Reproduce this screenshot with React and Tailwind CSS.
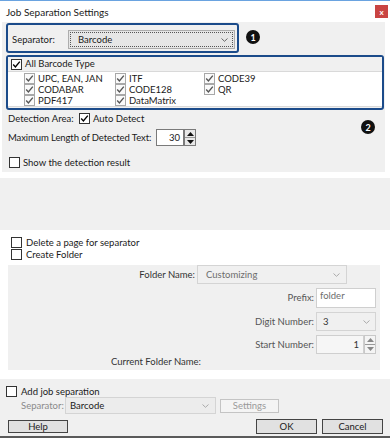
import React from 'react';

const Check = ({ checked, dim }) => (
  <span
    className={`inline-flex w-[11px] h-[11px] shrink-0 items-center justify-center border ${
      dim ? 'border-[#a8a8a8] bg-[#fafafa]' : 'border-[#333] bg-white'
    }`}
  >
    {checked && (
      <svg width="9" height="9" viewBox="0 0 9 9">
        <path d="M1.2 4.6 L3.4 6.9 L7.8 1.6" fill="none" stroke={dim ? '#555' : '#000'} strokeWidth="1.4" />
      </svg>
    )}
  </span>
);

const Chevron = ({ color = '#666' }) => (
  <svg width="7" height="4" viewBox="0 0 7 4">
    <path d="M0.5 0.5 L3.5 3.3 L6.5 0.5" fill="none" stroke={color} strokeWidth="1" />
  </svg>
);

const Badge = ({ n }) => (
  <span className="flex w-[14px] h-[14px] items-center justify-center rounded-full bg-[#111] text-[9px] font-bold leading-none text-white">
    {n}
  </span>
);

const Spin = ({ dim }) => (
  <div className={`flex flex-col w-[12px] h-full border ${dim ? 'border-[#c8c8c8] bg-[#f4f4f4]' : 'border-[#7a7a7a] bg-[#e8e8e8]'}`}>
    <div className="flex flex-1 items-center justify-center border-b border-[#9a9a9a]">
      <svg width="7" height="4" viewBox="0 0 7 4"><path d="M0 4 L3.5 0 L7 4 Z" fill={dim ? '#888' : '#111'} /></svg>
    </div>
    <div className="flex flex-1 items-center justify-center">
      <svg width="7" height="4" viewBox="0 0 7 4"><path d="M0 0 L3.5 4 L7 0 Z" fill={dim ? '#888' : '#111'} /></svg>
    </div>
  </div>
);

const barcodes = [
  ['UPC, EAN, JAN', 'ITF', 'CODE39'],
  ['CODABAR', 'CODE128', 'QR'],
  ['PDF417', 'DataMatrix', null],
];

export default function App() {
  return (
    <div
      className="relative w-[390px] h-[443px] overflow-hidden bg-white text-[9.5px] leading-none whitespace-nowrap text-[#1a1a1a] border-t border-[#6aa3e0]"
      style={{ fontFamily: 'Lato, "Liberation Sans", sans-serif' }}
    >
      {/* title bar */}
      <div className="flex h-[21px] items-center justify-between pl-[6px] pr-[2px]">
        <span className="text-[10px]">Job Separation Settings</span>
        <span className="flex w-[13px] h-[13px] items-center justify-center bg-[#c94442] text-[8px] font-bold text-white">x</span>
      </div>

      {/* barcode settings panel */}
      <div className="relative ml-[2px] w-[383px] h-[150px] bg-[#f0f0f0] flex flex-col">
        <div className="flex items-start mt-[1px]">
          <div className="ml-[4px] w-[233px] h-[30px] rounded-[3px] border-2 border-[#1b4b8a] flex items-center pl-[4px] pt-[3px]">
            <span className="w-[56px]">Separator:</span>
            <div className="flex w-[167px] h-[19px] items-center justify-between border border-[#adadad] bg-[#e6e6e6] p-[1px]">
              <div className="flex h-full flex-1 items-center justify-between border border-dotted border-[#555] pl-[7px] pr-[4px]">
                <span>Barcode</span>
                <Chevron />
              </div>
            </div>
          </div>
          <div className="ml-[7px] mt-[7px]">
            <Badge n="1" />
          </div>
        </div>

        <div className="ml-[4px] mt-[2px] w-[378px] h-[55px] rounded-[3px] border-2 border-[#1b4b8a] flex flex-col">
          <div className="flex h-[15px] items-center gap-[3px] pl-[3px] bg-[#f0f0f0]">
            <Check checked />
            <span>All Barcode Type</span>
          </div>
          <div className="flex flex-1 flex-col border-y border-[#d9d9d9] bg-white pt-[1px] pl-[16px] mb-[1px]">
            {barcodes.map((row, i) => (
              <div key={i} className="flex h-[11px] items-center">
                {row.map((name, j) => (
                  <div key={j} className={`flex items-center gap-[3px] ${j === 0 ? 'w-[91px]' : j === 1 ? 'w-[89px]' : ''}`}>
                    {name && (
                      <>
                        <Check checked dim />
                        <span>{name}</span>
                      </>
                    )}
                  </div>
                ))}
              </div>
            ))}
          </div>
        </div>

        <div className="flex h-[11px] items-center mt-[3px] pl-[6px]">
          <span className="w-[71px]">Detection Area:</span>
          <Check checked />
          <span className="ml-[3px]">Auto Detect</span>
        </div>

        <div className="flex h-[17px] items-center mt-[5px] pl-[6px]">
          <span className="w-[148px] tracking-[-0.1px]">Maximum Length of Detected Text:</span>
          <div className="flex h-[17px] w-[28px] items-center justify-end border border-[#7a7a7a] bg-white pr-[3px]">30</div>
          <Spin />
        </div>

        <div className="flex h-[11px] items-center gap-[3px] mt-[11px] pl-[7px]">
          <Check />
          <span>Show the detection result</span>
        </div>

        <div className="absolute right-[10px] top-[98px]">
          <Badge n="2" />
        </div>
      </div>

      <div className="h-[6px]" />
      <div className="h-[52px] bg-[#f0f0f0]" />

      {/* page options */}
      <div className="flex h-[35px] flex-col pl-[11px] pt-[7px]">
        <div className="flex h-[11px] items-center gap-[4px]">
          <Check />
          <span>Delete a page for separator</span>
        </div>
        <div className="mt-[1px] flex h-[11px] items-center gap-[4px]">
          <Check />
          <span>Create Folder</span>
        </div>
      </div>

      {/* folder panel */}
      <div className="ml-[8px] w-[372px] h-[105px] bg-[#f0f0f0] flex flex-col">
        <div className="flex h-[19px] items-center">
          <span className="w-[189px] pr-[2px] text-right text-[#333]">Folder Name:</span>
          <div className="flex w-[150px] h-[19px] items-center justify-between border border-[#d4d4d4] bg-[#f0f0f0] pl-[8px] pr-[6px] text-[#6d6d6d]">
            <span>Customizing</span>
            <Chevron color="#aaa" />
          </div>
        </div>
        <div className="mt-[4px] flex h-[20px] items-center">
          <span className="w-[308px] pr-[2px] text-right text-[#555]">Prefix:</span>
          <div className="flex w-[60px] h-[20px] items-start border border-[#cfcfcf] bg-white pl-[3px] pt-[2px] text-[#6d6d6d]">folder</div>
        </div>
        <div className="mt-[4px] flex h-[19px] items-center">
          <span className="w-[308px] pr-[2px] text-right text-[#555]">Digit Number:</span>
          <div className="flex w-[60px] h-[19px] items-center justify-between border border-[#d4d4d4] bg-[#f0f0f0] pl-[6px] pr-[5px] text-[#333]">
            <span>3</span>
            <Chevron color="#aaa" />
          </div>
        </div>
        <div className="mt-[4px] flex h-[19px] items-center">
          <span className="w-[308px] pr-[2px] text-right text-[#555]">Start Number:</span>
          <div className="flex w-[48px] h-[19px] items-center justify-end border border-[#cfcfcf] bg-[#f6f6f6] pr-[4px] text-[#333]">1</div>
          <Spin dim />
        </div>
        <div className="mt-[2px] flex h-[12px] items-center">
          <span className="w-[193px] text-right text-[#333]">Current Folder Name:</span>
        </div>
      </div>

      <div className="h-[9px]" />

      {/* bottom section */}
      <div className="h-[59px] bg-[#f0f0f0] flex flex-col border-b-2 border-[#5a5a5a]">
        <div className="mt-[7px] flex h-[11px] items-center gap-[4px] pl-[6px]">
          <Check />
          <span>Add job separation</span>
        </div>
        <div className="flex h-[17px] items-center pl-[21px]">
          <span className="w-[44px] text-[#8a8a8a]">Separator:</span>
          <div className="flex w-[151px] h-[17px] items-center justify-between border border-[#d4d4d4] bg-[#ececec] pl-[4px] pr-[6px]">
            <span>Barcode</span>
            <Chevron color="#aaa" />
          </div>
          <div className="ml-[4px] flex w-[59px] h-[14px] items-center justify-center border border-[#c4c4c4] bg-[#f4f4f4] text-[#9a9a9a]">Settings</div>
        </div>
        <div className="mt-[5px] flex items-center pl-[8px] pr-[7px]">
          <div className="flex w-[60px] h-[13px] items-center justify-center border border-[#444] bg-[#e1e1e1]">Help</div>
          <div className="ml-auto flex w-[61px] h-[15px] items-center justify-center border border-[#444] bg-[#e1e1e1]">OK</div>
          <div className="ml-[5px] flex w-[61px] h-[15px] items-center justify-center border border-[#444] bg-[#e1e1e1]">Cancel</div>
        </div>
      </div>
    </div>
  );
}
